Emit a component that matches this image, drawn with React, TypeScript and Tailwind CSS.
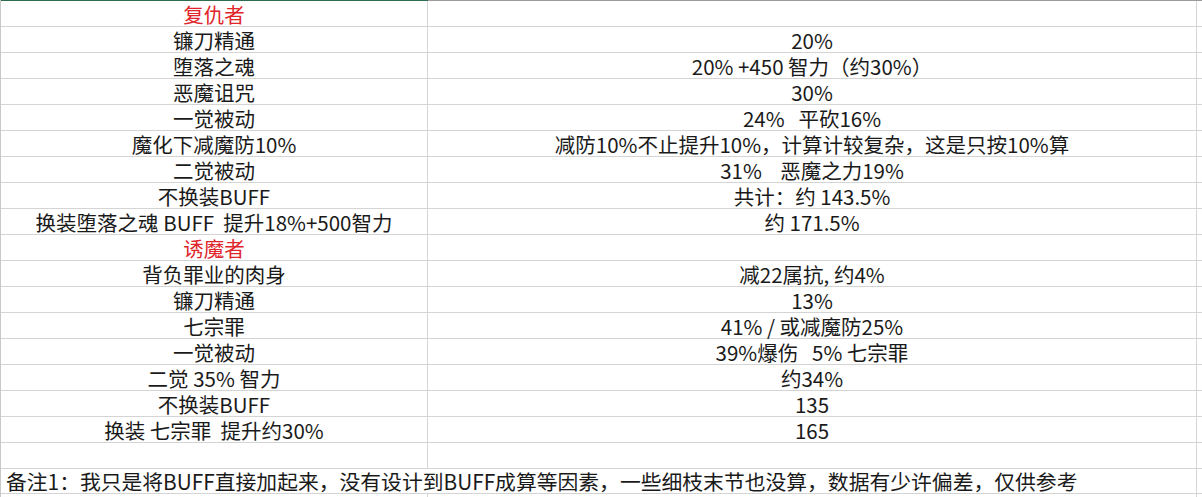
const rows: { a: string; b: string; red?: boolean }[] = [
  { a: "复仇者", b: "", red: true },
  { a: "镰刀精通", b: "20%" },
  { a: "堕落之魂", b: "20% +450 智力（约30%）" },
  { a: "恶魔诅咒", b: "30%" },
  { a: "一觉被动", b: "24%   平砍16%" },
  { a: "魔化下减魔防10%", b: "减防10%不止提升10%，计算计较复杂，这是只按10%算" },
  { a: "二觉被动", b: "31%    恶魔之力19%" },
  { a: "不换装BUFF", b: "共计：约 143.5%" },
  { a: "换装堕落之魂 BUFF  提升18%+500智力", b: "约 171.5%" },
  { a: "诱魔者", b: "", red: true },
  { a: "背负罪业的肉身", b: "减22属抗, 约4%" },
  { a: "镰刀精通", b: "13%" },
  { a: "七宗罪", b: "41% / 或减魔防25%" },
  { a: "一觉被动", b: "39%爆伤   5% 七宗罪" },
  { a: "二觉 35% 智力", b: "约34%" },
  { a: "不换装BUFF", b: "135" },
  { a: "换装 七宗罪  提升约30%", b: "165" },
  { a: "", b: "" },
];

const font = { fontFamily: '"Noto Sans CJK SC", sans-serif' };

export default function App() {
  return (
    <div
      className="w-[1202px] h-[497px] overflow-hidden bg-white text-[20.5px] text-[#1a1a1a] border-l border-[#c8c8c8]"
      style={font}
    >
      <div className="grid grid-cols-[427px_769px_1fr]">
        {/* header edge */}
        <div className="h-px bg-[#2f6b4f]" />
        <div className="h-px bg-[#9b9b9b]" />
        <div className="h-px bg-[#9b9b9b]" />

        {rows.map((r, i) => (
          <Row key={i} {...r} />
        ))}

        <div className="col-span-2 h-[25px] border-b border-r border-[#d4d4d4] pl-[5px] text-[20.8px] leading-[24px] whitespace-pre">
          备注1：我只是将BUFF直接加起来，没有设计到BUFF成算等因素，一些细枝末节也没算，数据有少许偏差，仅供参考
        </div>
        <div className="h-[25px] border-b border-[#d4d4d4]" />

        <div className="h-[26px] border-b border-r border-[#d4d4d4]" />
        <div className="h-[26px] border-b border-r border-[#d4d4d4]" />
        <div className="h-[26px] border-b border-[#d4d4d4]" />
      </div>
    </div>
  );
}

function Row({ a, b, red }: { a: string; b: string; red?: boolean }) {
  return (
    <>
      <div
        className={`h-[26px] border-b border-r border-[#d4d4d4] text-center whitespace-pre leading-[24px] pt-px ${
          red ? "text-[#e0262b]" : ""
        }`}
      >
        {a}
      </div>
      <div className="h-[26px] border-b border-r border-[#d4d4d4] text-center whitespace-pre leading-[24px] pt-px">
        {b}
      </div>
      <div className="h-[26px] border-b border-[#d4d4d4]" />
    </>
  );
}
